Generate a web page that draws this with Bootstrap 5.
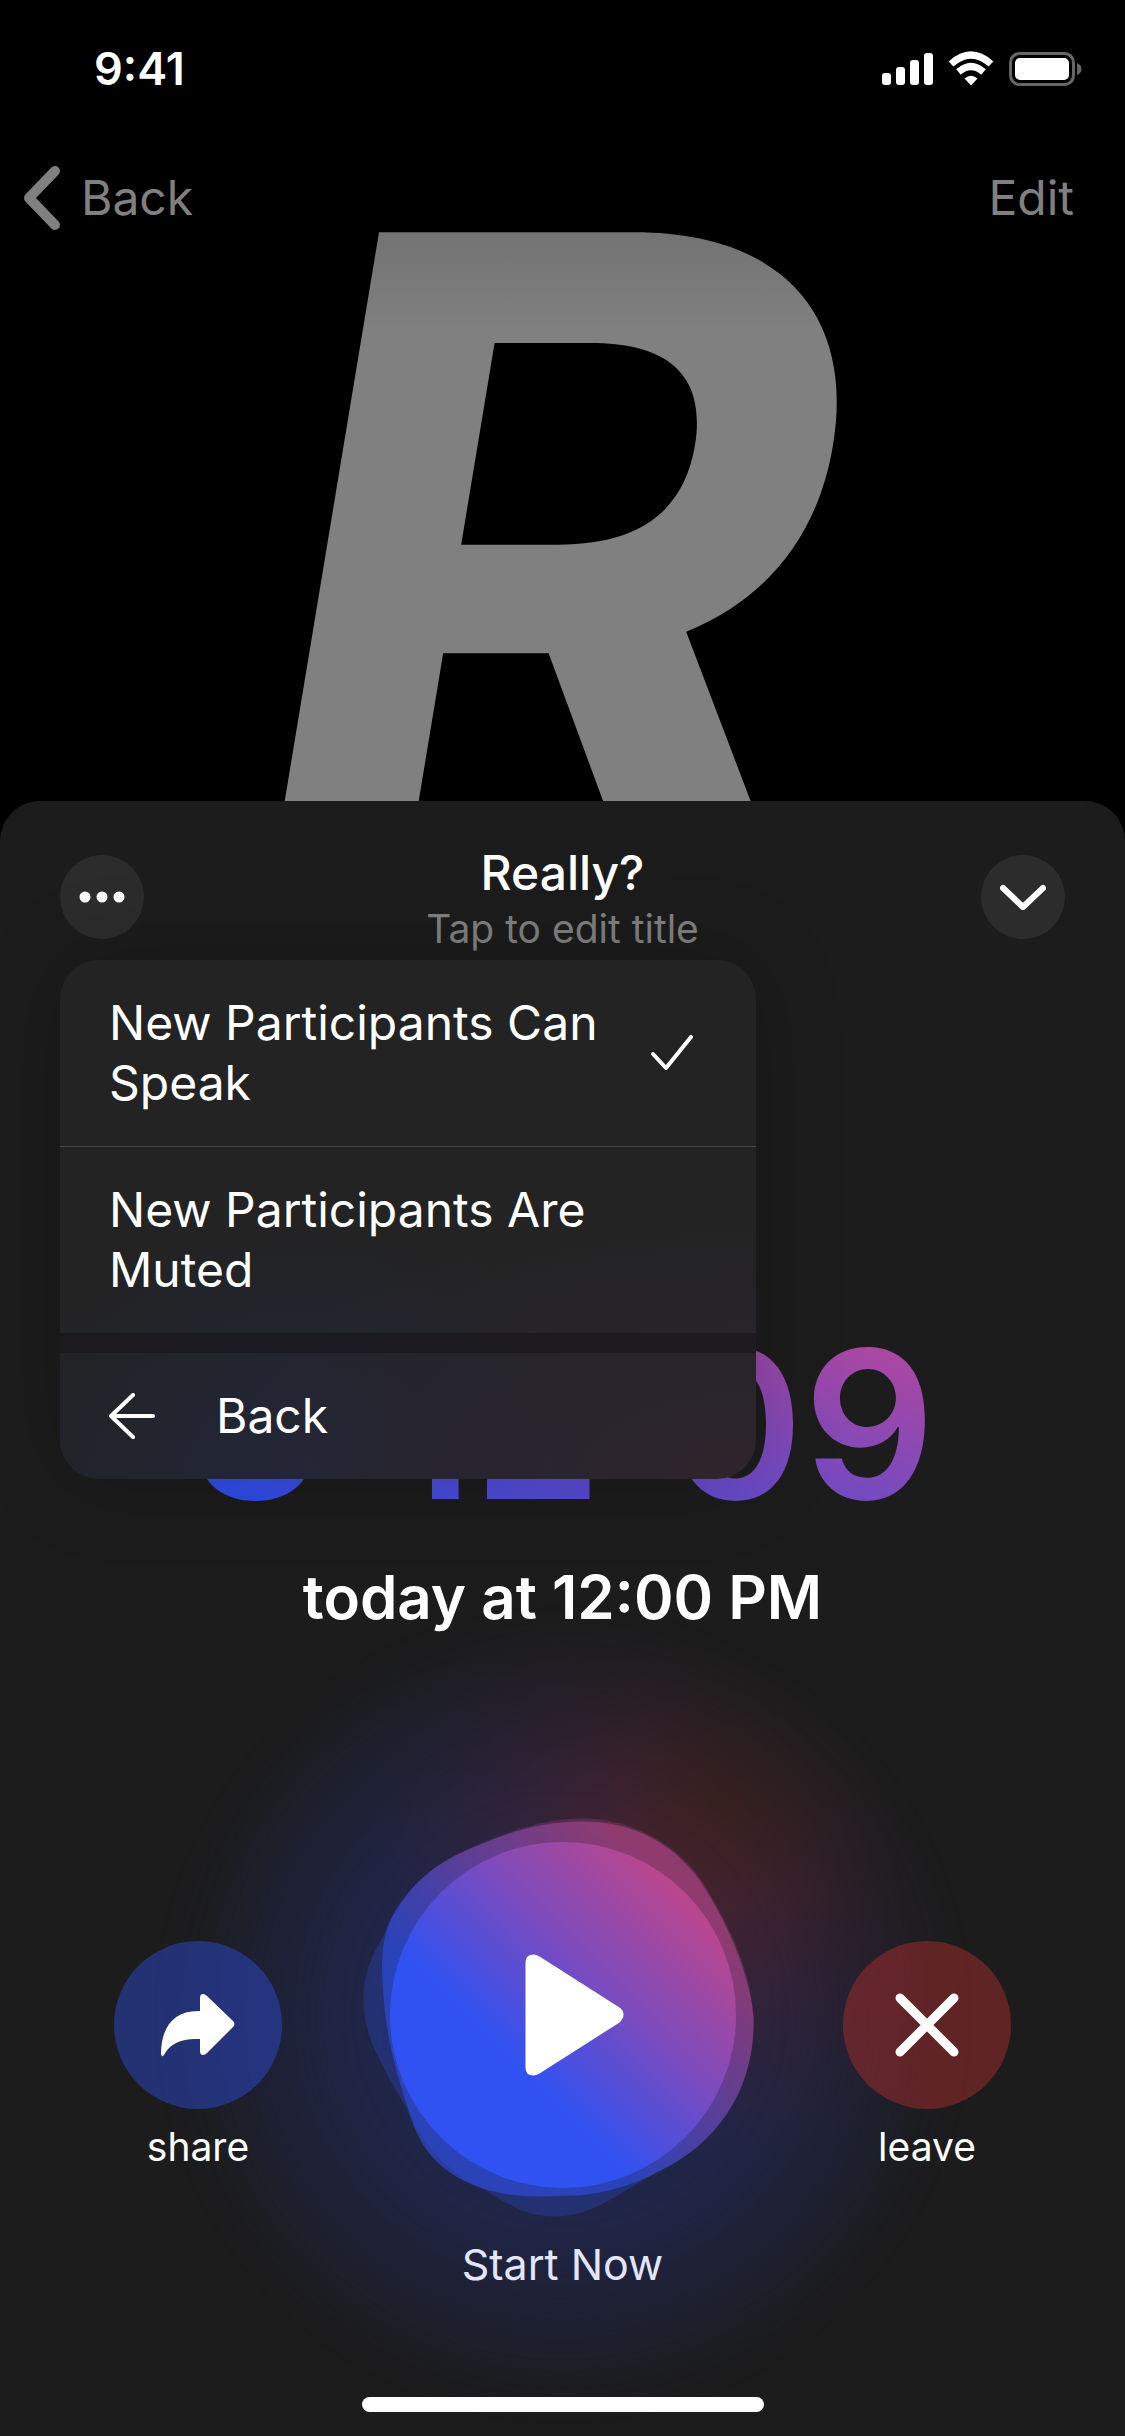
<!DOCTYPE html>
<html lang="en">
<head>
<meta charset="utf-8">
<meta name="viewport" content="width=device-width, initial-scale=1">
<title>Scheduled voice chat</title>
<link href="https://cdn.jsdelivr.net/npm/bootstrap@5.3.0/dist/css/bootstrap.min.css" rel="stylesheet">
<style>
body { background: #000; color: #fff; font-family: Inter, "Liberation Sans", sans-serif; font-size: 48px; line-height: 60px; }
svg { display: block; flex: none; }
.hero { height: 801px; }
.hero-art { position: absolute; inset: 0; width: 100%; height: 100%; }
.status-row { height: 138px; padding: 0 43px 0 94px; font-size: 45px; font-weight: 600; }
.top-nav { height: 120px; padding: 0 51px 0 24px; }
.top-nav a { color: #808080; text-decoration: none; gap: 21px; }
.sheet { background: #1c1c1c; border-radius: 40px 40px 0 0; }
.sheet-head { padding: 42px 60px 0; }
.round-btn { width: 84px; height: 84px; margin-top: 12px; background: #2c2c2c; border: 0; border-radius: 50%; color: #fff; }
.chat-title { font-size: 48px; line-height: 60px; font-weight: 500; color: #fff; }
.chat-sub { font-size: 39px; line-height: 52px; color: #808080; }
.option-menu { position: absolute; top: 159px; left: 60px; width: 696px; border-radius: 39px; overflow: hidden;
  background: radial-gradient(ellipse 560px 270px at 100% 100%, #2f242c 0, rgba(42,37,46,.85) 40%, transparent 100%), radial-gradient(ellipse 330px 260px at 35% 100%, #22263a 0, transparent 100%), #232323; }
.menu-shadow { position: absolute; top: 159px; left: 60px; width: 696px; height: 519px; border-radius: 39px; box-shadow: 0 0 90px rgba(0,0,0,.2); }
.option-menu button { display: flex; align-items: center; width: 100%; padding: 33px 63px 33px 49px; background: none; border: 0; color: #fff; text-align: left; }
.option-menu .opt-first { border-bottom: 1px solid #454545; }
.option-menu .opt-gap { height: 20px; background: rgba(20,16,20,.45); }
.option-menu .opt-label { width: 500px; }
.option-menu .opt-back { gap: 61px; }
.countdown { margin-top: 349px; font-size: 206px; line-height: 240px; font-weight: 600;
  background: linear-gradient(to top right, #2c4ce8 12%, #b8479a 95%); -webkit-background-clip: text; background-clip: text; color: transparent; }
.start-time { margin-top: 17px; font-size: 60px; line-height: 72px; font-weight: 600; }
.controls { margin-top: 209px; padding: 0 114px; isolation: isolate; }
.controls button { border: 0; background: none; color: #fff; padding: 0; }
.side-action { margin-top: 99px; width: 168px; font-size: 39px; line-height: 48px; }
.side-action .disc { width: 168px; height: 168px; border-radius: 50%; margin-bottom: 14px; }
.disc-share { background: rgba(43,71,204,.5); }
.disc-leave { background: rgba(164,44,44,.5); }
.play-action { position: relative; font-size: 43px; line-height: 54px; }
.play-action svg { overflow: visible; margin-bottom: 49px; }
.play-action .caption-text { color: #e3e6fb; }
.glow { position: absolute; z-index: -1; left: 50%; top: 173px; width: 840px; height: 840px; margin: -420px 0 0 -420px; border-radius: 50%; pointer-events: none;
  background: radial-gradient(circle at 70% 24%, rgba(70,34,30,.98) 0, rgba(72,35,46,.85) 110px, rgba(62,34,52,.6) 210px, transparent 360px),
   #20264a;
  -webkit-mask-image: radial-gradient(circle, #000 170px, rgba(0,0,0,.85) 230px, rgba(0,0,0,.4) 320px, rgba(0,0,0,.12) 370px, transparent 410px); mask-image: radial-gradient(circle, #000 170px, rgba(0,0,0,.85) 230px, rgba(0,0,0,.4) 320px, rgba(0,0,0,.12) 370px, transparent 410px); }
.home-bar { width: 402px; height: 15px; border-radius: 8px; background: #fff; margin-bottom: 24px; }
</style>
</head>
<body>
<div class="d-flex flex-column min-vh-100">
  <header class="hero position-relative overflow-hidden">
    <svg class="hero-art" viewBox="0 0 1125 801" preserveAspectRatio="xMidYMin slice" aria-hidden="true">
      <defs><linearGradient id="fade" gradientUnits="userSpaceOnUse" x1="0" y1="233" x2="0" y2="330"><stop offset="0" stop-color="#737373"/><stop offset="1" stop-color="#808080"/></linearGradient></defs>
      <text x="252" y="887" font-family="Inter, 'Liberation Sans', sans-serif" font-weight="700" font-style="italic" font-size="900" fill="url(#fade)">R</text>
    </svg>
    <div class="status-row d-flex align-items-center justify-content-between position-relative">
      <span>9:41</span>
      <svg width="206" height="36" viewBox="0 0 206 36" fill="#fff" aria-hidden="true">
        <rect x="6" y="22" width="9" height="12" rx="3"/><rect x="20" y="16" width="9" height="18" rx="3"/><rect x="34" y="9" width="9" height="25" rx="3"/><rect x="48" y="2" width="9" height="32" rx="3"/>
        <g fill="none" stroke="#fff" stroke-width="7"><path d="M75 13Q95-5 115 13"/><path d="M82.500 21Q95 10 107.500 21"/></g>
        <path d="M88.500 27.500Q95 22 101.500 27.500L95 34.500Z"/>
        <rect x="134.500" y="2.500" width="63" height="31" rx="9" fill="none" stroke="#666" stroke-width="3"/><rect x="139" y="7" width="54" height="22" rx="5"/><path d="M201 12Q205.500 14 205.500 18T201 24Z" fill="#666"/>
      </svg>
    </div>
    <nav class="top-nav d-flex align-items-center justify-content-between position-relative">
      <a href="#" class="d-flex align-items-center"><svg width="36" height="68" viewBox="0 0 36 68" fill="none" stroke="currentColor" stroke-width="10" stroke-linecap="round" stroke-linejoin="round"><path d="M31 7 5 34 31 61"/></svg>Back</a>
      <a href="#">Edit</a>
    </nav>
  </header>

  <main class="sheet position-relative flex-grow-1 d-flex flex-column align-items-center">
    <div class="sheet-head d-flex align-items-start justify-content-between w-100">
      <button type="button" class="round-btn d-flex align-items-center justify-content-center p-0" aria-label="More options" aria-expanded="true">
        <svg width="46" height="12" viewBox="0 0 46 12" fill="currentColor"><circle cx="6" cy="6" r="5.500"/><circle cx="23" cy="6" r="5.500"/><circle cx="40" cy="6" r="5.500"/></svg>
      </button>
      <div class="text-center">
        <h1 class="chat-title m-0">Really?</h1>
        <div class="chat-sub">Tap to edit title</div>
      </div>
      <button type="button" class="round-btn d-flex align-items-center justify-content-center p-0" aria-label="Collapse">
        <svg width="46" height="26" viewBox="0 0 46 26" fill="none" stroke="currentColor" stroke-width="6" stroke-linecap="round" stroke-linejoin="round"><path d="M3 4 23 23 43 4"/></svg>
      </button>
    </div>

    <div class="countdown">3:12:09</div>
    <div class="start-time">today at 12:00 PM</div>

    <div class="menu-shadow"></div>
    <div class="option-menu" role="menu">
      <button type="button" class="opt-first justify-content-between" role="menuitemradio" aria-checked="true"><span class="opt-label">New Participants Can Speak</span>
        <svg width="42" height="36" viewBox="0 0 42 36" fill="none" stroke="currentColor" stroke-width="4" stroke-linecap="round" stroke-linejoin="round"><path d="M2 19 15 33 40 2"/></svg></button>
      <button type="button" role="menuitemradio" aria-checked="false"><span class="opt-label">New Participants Are Muted</span></button>
      <div class="opt-gap"></div>
      <button type="button" class="opt-back" role="menuitem">
        <svg width="46" height="46" viewBox="0 0 46 46" fill="none" stroke="currentColor" stroke-width="4" stroke-linecap="round" stroke-linejoin="round"><path d="M24 2 2 23 24 44M2 23H44"/></svg>Back</button>
    </div>

    <div class="controls d-flex align-items-start justify-content-between w-100">
      <button type="button" class="side-action">
        <span class="disc disc-share d-flex align-items-center justify-content-center">
          <svg width="76" height="64" viewBox="0 0 76 64" fill="#fff"><path d="M40 18V5Q40 1 43 1Q45 1 47 3L73 28Q76 31 73 34L47 60Q45 62 43 62Q40 62 40 58V46C22 45 10 50 4 62Q2 65 1 61C1 34 14 17 40 18Z"/></svg>
        </span>share
      </button>
      <button type="button" class="play-action">
        <span class="glow"></span>
        <svg width="346" height="346" viewBox="89.500 81.500 346 346">
          <defs><linearGradient id="orb" gradientUnits="userSpaceOnUse" x1="89" y1="427" x2="435" y2="81"><stop offset=".36" stop-color="#3052f2"/><stop offset=".6" stop-color="#7b4bbf"/><stop offset=".84" stop-color="#b8478f"/></linearGradient></defs>
          <path fill="url(#orb)" opacity=".25" d="M287 58C240 57 200 74 167 89C125 108 98 135 83 175C67 203 59 223 65 260C70 290 91 319 107 350C127 392 150 412 180 427C215 449 230 456 253 456C296 456 320 430 360 410C420 381 455 325 453 257C451 215 433 171 400 118C376 85 335 60 287 58Z"/>
          <path fill="url(#orb)" opacity=".55" d="M280 61C240 61 205 73 170 88C139 101 120 117 107 134C86 159 80 180 82 220C84 270 95 310 107 346C116 378 130 410 182 428C215 438 245 436 275 435C310 433 340 421 360 410C420 381 455 325 453 257C451 225 433 171 400 121C370 78 325 60 280 61Z"/>
          <circle cx="262.500" cy="254.500" r="173" fill="url(#orb)"/>
          <path d="M225 202Q225 194 233 194Q236 194 239 196L319 247Q323 250 323 254T319 262L239 313Q236 315 233 315Q225 315 225 307Z" fill="#fff"/>
        </svg>
        <span class="caption-text">Start Now</span>
      </button>
      <button type="button" class="side-action">
        <span class="disc disc-leave d-flex align-items-center justify-content-center">
          <svg width="64" height="64" viewBox="0 0 64 64" fill="none" stroke="#fff" stroke-width="9" stroke-linecap="round"><path d="M5 5 59 59M59 5 5 59"/></svg>
        </span>leave
      </button>
    </div>
    <div class="home-bar mt-auto position-relative"></div>
  </main>
</div>
<script src="https://cdn.jsdelivr.net/npm/bootstrap@5.3.0/dist/js/bootstrap.bundle.min.js"></script>
</body>
</html>
